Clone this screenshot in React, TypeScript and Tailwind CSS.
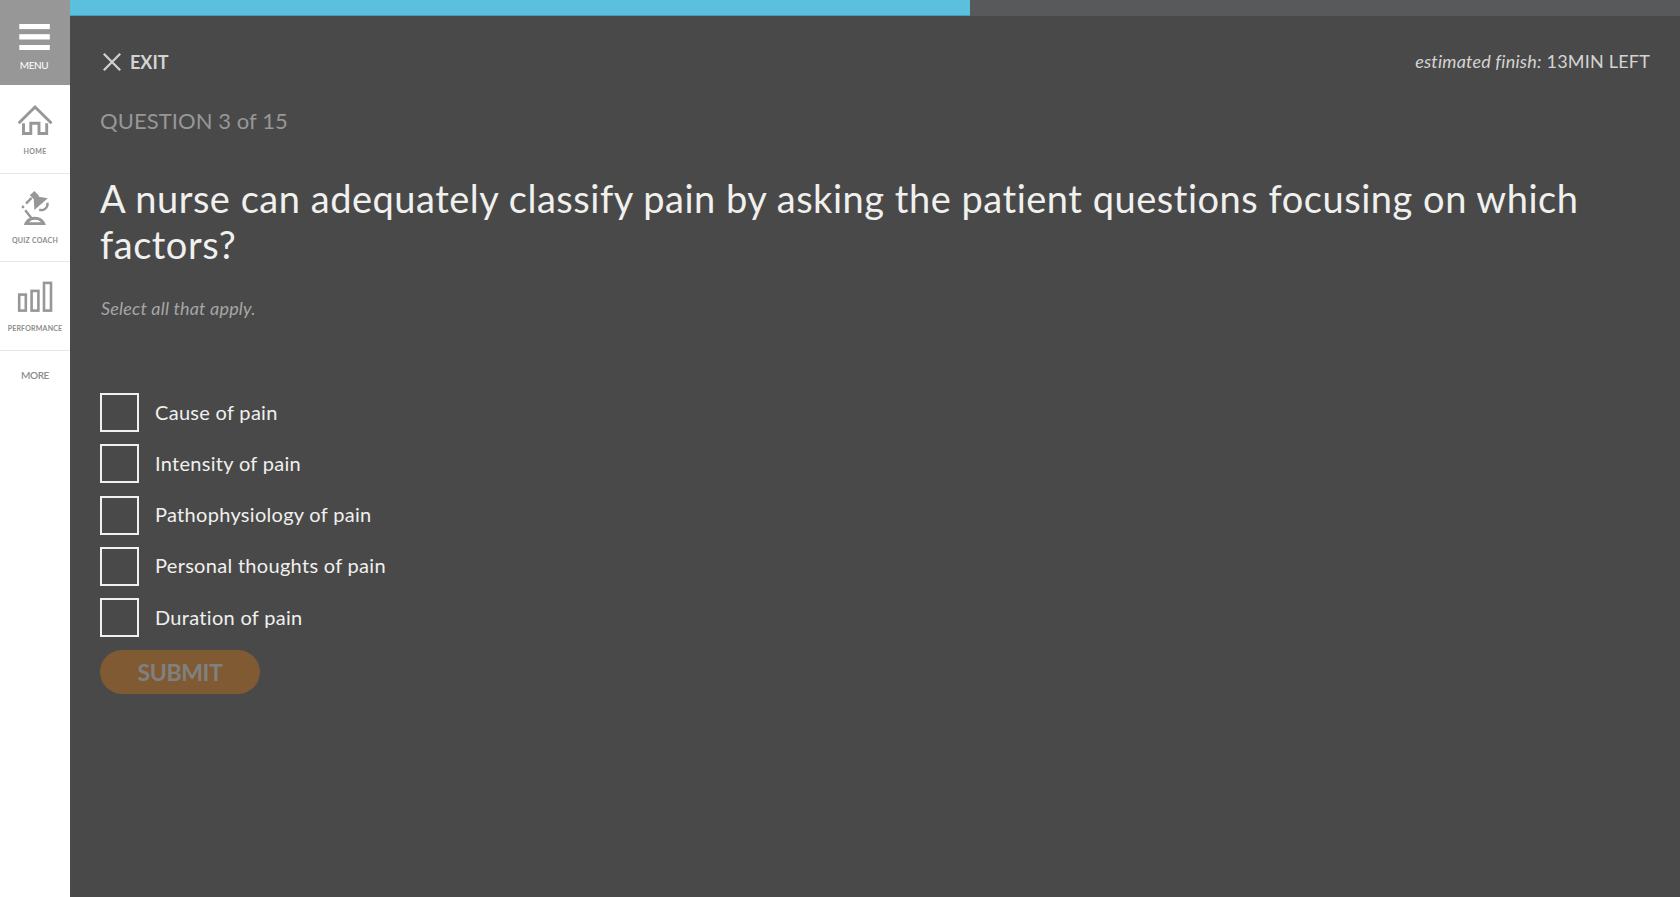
import type { ReactNode } from "react";

const options = [
  "Cause of pain",
  "Intensity of pain",
  "Pathophysiology of pain",
  "Personal thoughts of pain",
  "Duration of pain",
];

function MenuIcon() {
  return (
    <svg width="70" height="32" viewBox="0 21 70 32" fill="#fff">
      <rect x="19.3" y="24" width="30.5" height="5.1" />
      <rect x="19.3" y="34.2" width="30.5" height="5.3" />
      <rect x="19.3" y="45" width="30.5" height="5" />
    </svg>
  );
}

function HomeIcon() {
  return (
    <svg width="70" height="36" viewBox="0 102 70 36" fill="none" stroke="#979797" strokeWidth="2.9">
      <path d="M18.7 123.3 35 107l16.5 16.3" />
      <path d="M23.5 123.3V133.5H30.8V123.3H39V133.5H46.7V123.3" />
    </svg>
  );
}

function LampIcon() {
  return (
    <svg width="70" height="40" viewBox="0 188 70 40" fill="#979797">
      <path d="M29.8 195.2 34.4 191l4.4 4.4v1.4l9 1.5L34.4 210l-.7-11Z" />
      <g fill="none" stroke="#979797" strokeWidth="2.4">
        <path d="M47.4 202.7A6.2 6.2 0 0 1 39.2 209.7" />
        <path d="M31.6 197.8 26 203.6" />
        <path d="M25.2 210.2 31.2 217.8" />
      </g>
      <circle cx="23" cy="207" r="1.4" />
      <path
        fillRule="evenodd"
        d="M24 225C26.3 214 43.4 214 45.8 225ZM29 222.3H41C38 219 32 219 29 222.3Z"
      />
    </svg>
  );
}

function BarsIcon() {
  return (
    <svg width="70" height="36" viewBox="0 278 70 36" fill="none" stroke="#979797" strokeWidth="2.6">
      <rect x="19.2" y="294.6" width="6.6" height="16" />
      <rect x="31.6" y="290.9" width="6.8" height="19.7" />
      <rect x="44" y="282.9" width="7" height="27.7" />
    </svg>
  );
}

function NavItem({ className, icon, children }: { className: string; icon: ReactNode; children: ReactNode }) {
  return (
    <a className={"flex flex-col items-center border-b border-[#e8e8e8] text-[7px] leading-[10px] font-bold text-[#8c8c8c] " + className}>
      {icon}
      {children}
    </a>
  );
}

export default function App() {
  return (
    <div className="flex h-screen overflow-hidden bg-[#494949] font-['Lato',sans-serif]">
      <nav className="flex w-[70px] shrink-0 flex-col bg-white">
        <button className="flex h-[85px] flex-col items-center bg-[#979797] pt-[21px] text-[10px] leading-3 text-white">
          <MenuIcon />
          <span className="mt-[6px] mr-[2px] tracking-[-0.4px]">MENU</span>
        </button>
        <NavItem className="h-[89px] pt-[17px]" icon={<HomeIcon />}>
          <span className="mt-[8px] tracking-[0.35px]">HOME</span>
        </NavItem>
        <NavItem className="h-[88px] pt-[14px]" icon={<LampIcon />}>
          <span className="mt-[7px] tracking-[0.25px]">QUIZ COACH</span>
        </NavItem>
        <NavItem className="h-[89px] pt-[16px]" icon={<BarsIcon />}>
          <span className="mt-[9px] tracking-[0.2px]">PERFORMANCE</span>
        </NavItem>
        <a className="mt-[18px] text-center text-[10px] leading-3 font-semibold tracking-[-0.4px] text-[#8c8c8c]">MORE</a>
      </nav>

      <main className="flex min-w-0 flex-1 flex-col">
        <div className="flex h-4 shrink-0 bg-[#58595b]">
          <div className="h-4 w-[900px] border-b border-[#4a9db8] bg-[#5bc0de]" />
        </div>

        <div className="flex flex-col items-start pr-[30px] pl-[30px]">
          <header className="mt-[34px] flex h-6 w-full items-center justify-between text-lg leading-6 text-[#d4d4d4]">
            <button className="flex items-center font-bold">
              <svg width="24" height="24" viewBox="0 0 24 24" stroke="#d0d0d0" strokeWidth="2.3" className="mr-[6px]">
                <path d="M3.8 3.8 20.2 20.2M20.2 3.8 3.8 20.2" />
              </svg>
              <span>EXIT</span>
            </button>
            <p className="flex gap-[5px] pb-[2px]">
              <i className="tracking-[0.2px]">estimated finish:</i>
              <span className="tracking-[0.2px]">13MIN LEFT</span>
            </p>
          </header>

          <p className="mt-8 text-[22px] leading-[30px] tracking-[0.07px] text-[#979797]">QUESTION 3 of 15</p>

          <h1 className="mt-[39px] text-[38px] leading-[46px] tracking-[0.52px] text-[#f0f0ee]">
            A nurse can adequately classify pain by asking the patient questions focusing on which
            <br />
            factors?
          </h1>

          <p className="mt-[29px] pl-px text-lg leading-6 tracking-[0.18px] text-[#a6a6a6] italic">Select all that apply.</p>

          <ul className="mt-[73px] flex flex-col gap-[12.25px]">
            {options.map((option) => (
              <li key={option} className="flex h-[39px] items-center text-[20px] leading-[39px] tracking-[0.3px] text-[#f0f0ee]">
                <span className="mr-4 size-[39px] border-2 border-[#f0f0ee]" />
                <span className="mb-[0.6px]">{option}</span>
              </li>
            ))}
          </ul>

          <button className="mt-[13px] h-11 w-40 rounded-full bg-[#805a32] text-[23px] leading-[44px] font-bold tracking-[-0.4px] text-[#808080]">
            SUBMIT
          </button>
        </div>
      </main>
    </div>
  );
}
